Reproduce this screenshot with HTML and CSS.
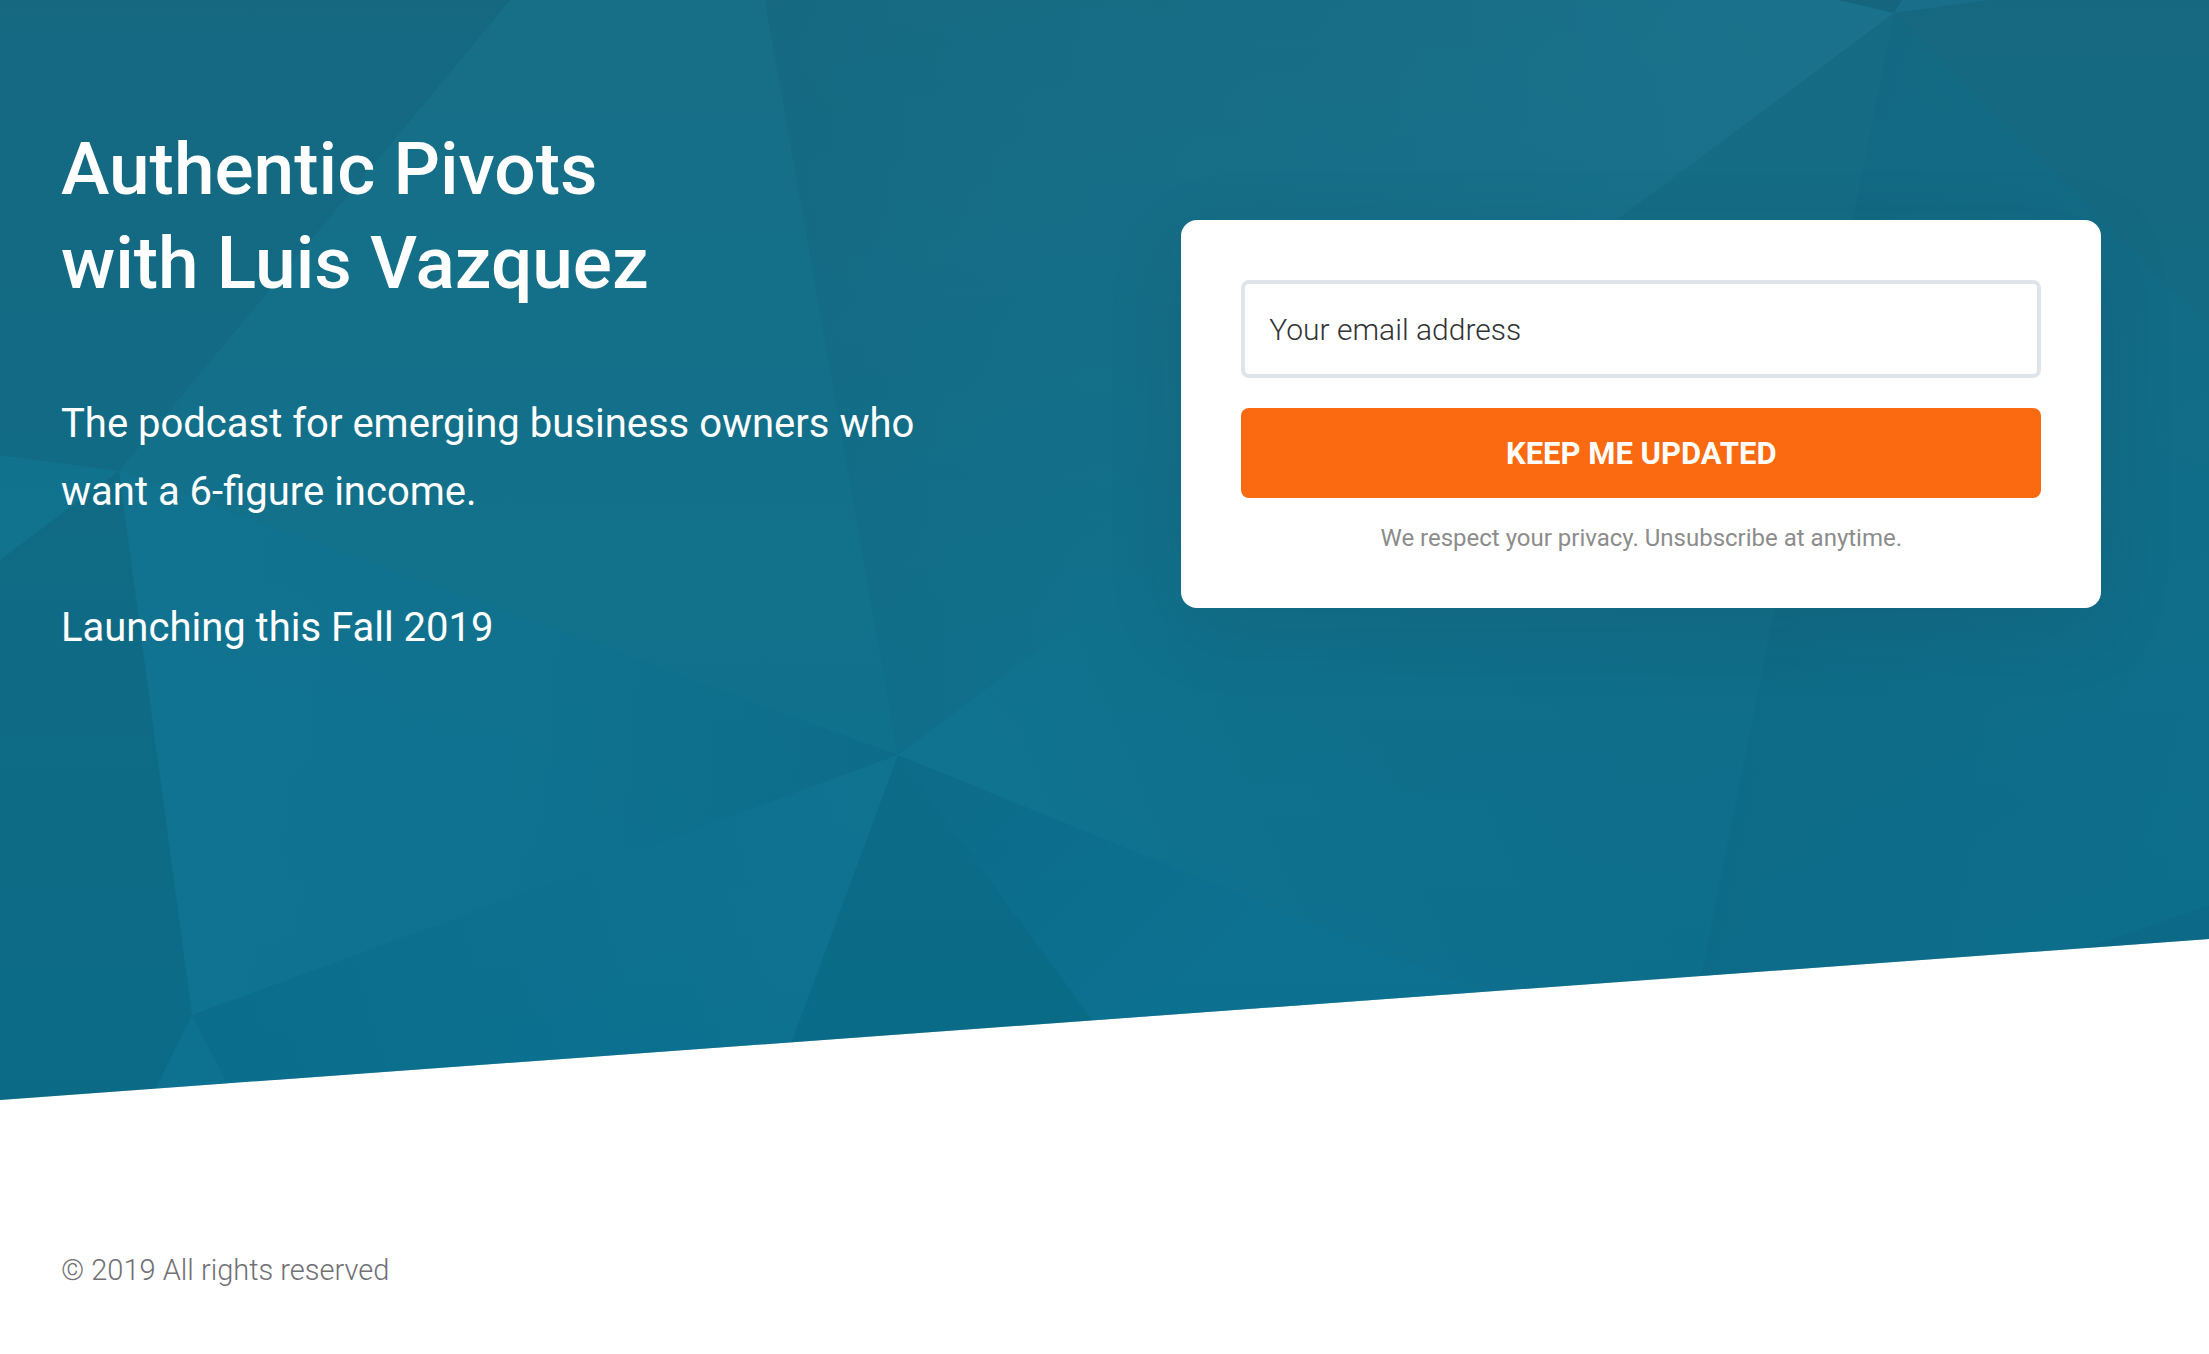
FILE: index.html
```html
<!DOCTYPE html>
<html lang="en">
<head>
<meta charset="UTF-8">
<meta name="viewport" content="width=device-width, initial-scale=1.0">
<title>Authentic Pivots with Luis Vazquez</title>
<link rel="stylesheet" href="styles.css">
</head>
<body>

<header class="hero">
  <svg class="hero-bg" viewBox="0 0 2209 1100" preserveAspectRatio="none" aria-hidden="true">
    <defs>
      <linearGradient id="base" x1="0" y1="0" x2="0" y2="1"><stop offset="0" stop-color="#186c84"/><stop offset=".55" stop-color="#11708b"/><stop offset="1" stop-color="#0b708f"/></linearGradient>
      <linearGradient id="gTop" gradientUnits="userSpaceOnUse" x1="765" y1="0" x2="1800" y2="0"><stop offset="0" stop-color="#12607a" stop-opacity=".25"/><stop offset=".35" stop-color="#14708c" stop-opacity=".1"/><stop offset="1" stop-color="#1b7590" stop-opacity=".6"/></linearGradient>
      <linearGradient id="gMid" gradientUnits="userSpaceOnUse" x1="150" y1="700" x2="898" y2="755"><stop offset="0" stop-color="#117696" stop-opacity=".45"/><stop offset=".5" stop-color="#0f7492" stop-opacity=".4"/><stop offset=".75" stop-color="#0d6f8c" stop-opacity=".4"/><stop offset="1" stop-color="#0c6986" stop-opacity=".55"/></linearGradient>
      <linearGradient id="gLow" gradientUnits="userSpaceOnUse" x1="192" y1="1015" x2="850" y2="800"><stop offset="0" stop-color="#0a6a86" stop-opacity=".45"/><stop offset=".5" stop-color="#0b7092" stop-opacity=".4"/><stop offset="1" stop-color="#107592" stop-opacity=".5"/></linearGradient>
      <linearGradient id="gFan" gradientUnits="userSpaceOnUse" x1="898" y1="755" x2="1150" y2="1010"><stop offset="0" stop-color="#0b6784" stop-opacity=".5"/><stop offset="1" stop-color="#0c7194" stop-opacity=".5"/></linearGradient>
      <linearGradient id="gCenter" gradientUnits="userSpaceOnUse" x1="1000" y1="800" x2="1720" y2="500"><stop offset="0" stop-color="#117692" stop-opacity=".45"/><stop offset="1" stop-color="#0f6682" stop-opacity=".2"/></linearGradient>
      <linearGradient id="gRight" gradientUnits="userSpaceOnUse" x1="1740" y1="600" x2="2209" y2="700"><stop offset="0" stop-color="#0c647f" stop-opacity=".45"/><stop offset="1" stop-color="#0d6a88" stop-opacity=".3"/></linearGradient>
    </defs>
    <rect width="2209" height="1100" fill="url(#base)"/>
    <polygon points="0,0 510,0 119,471 0,455" fill="#10566f" fill-opacity=".15"/>
    <polygon points="0,455 119,471 0,560" fill="#117896" fill-opacity=".35"/>
    <polygon points="0,560 119,471 192,1015 150,1100 0,1100" fill="#0c5f78" fill-opacity=".3"/>
    <polygon points="119,471 510,0 765,0 898,755" fill="#14728c" fill-opacity=".35"/>
    <polygon points="765,0 1838,0 1894,13 898,755" fill="url(#gTop)"/>
    <polygon points="119,471 898,755 192,1015" fill="url(#gMid)"/>
    <polygon points="192,1015 898,755 780,1080 225,1080" fill="url(#gLow)"/>
    <polygon points="192,1015 236,1100 150,1100" fill="#117595" fill-opacity=".35"/>
    <polygon points="898,755 1151,1100 770,1100" fill="#09607c" fill-opacity=".35"/>
    <polygon points="898,755 1550,1020 1550,1100 1151,1100" fill="url(#gFan)"/>
    <polygon points="898,755 1894,13 1676,1100 1550,1020" fill="url(#gCenter)"/>
    <polygon points="1838,0 1902,0 1894,13" fill="#10566f" fill-opacity=".3"/>
    <polygon points="1902,0 1990,0 1894,13" fill="#1b7590" fill-opacity=".4"/>
    <polygon points="1990,0 2209,0 2209,326 1894,13" fill="#10566f" fill-opacity=".18"/>
    <polygon points="1894,13 2209,326 2209,1100 1676,1100" fill="url(#gRight)"/>
    <polygon points="2209,905 2080,950 2209,950" fill="#0a5a76" fill-opacity=".2"/>
  </svg>

  <div class="container">
    <div class="col">
      <h1>Authentic Pivots<br>with Luis Vazquez</h1>
      <p class="lead">The podcast for emerging business owners who want a 6-figure income.<br><br>Launching this Fall 2019</p>
    </div>
    <div class="col">
      <form class="card">
        <input class="field" type="email" name="email" placeholder="Your email address" aria-label="Your email address">
        <button class="btn" type="submit">KEEP ME UPDATED</button>
        <p class="note">We respect your privacy. Unsubscribe at anytime.</p>
      </form>
    </div>
  </div>
</header>

<footer class="footer">
  <p>© 2019 All rights reserved</p>
</footer>

</body>
</html>
```
FILE: styles.css
```css
* { box-sizing:border-box; }
body { margin:0; font-family:Roboto,sans-serif; background:#fff; }
h1, p { margin:0; }

.hero { position:relative; padding:122px 31px 394px; color:#fff; clip-path:polygon(0 0, 100% 0, 100% calc(100% - 161px), 0 100%); }
.hero-bg { position:absolute; top:0; left:0; width:100%; height:100%; }
.container { position:relative; display:grid; grid-template-columns:1fr 1fr; align-items:center; }
.col { padding:0 30px; }
.col h1 { margin-bottom:80px; font-size:73px; font-weight:500; line-height:94px; }
.lead { max-width:920px; margin-bottom:44px; font-size:40px; line-height:68px; }

.card { display:flex; flex-direction:column; max-width:920px; margin:0 auto; padding:60px 60px 50px; background:#fff; border-radius:16px; box-shadow:0 20px 80px rgba(34,35,40,.1); }
.field { height:98px; margin-bottom:30px; padding:0 24px; border:4px solid #dfe4eb; border-radius:8px; background:#fff; color:#333; font:300 30px Roboto,sans-serif; }
.field::placeholder { color:#333; opacity:1; }
.btn { height:90px; border:0; border-radius:8px; background:#fb6910; color:#fff; font:700 31px Roboto,sans-serif; cursor:pointer; }
.btn:hover { background:#e85c06; }
.note { margin-top:20px; color:#8c8c8c; font-size:24px; line-height:40px; text-align:center; }

.footer { padding:146px 61px 59px; color:#707075; font-size:29px; font-weight:300; line-height:48px; }

@media (max-width:1000px) {
  .container { grid-template-columns:1fr; }
}
```
